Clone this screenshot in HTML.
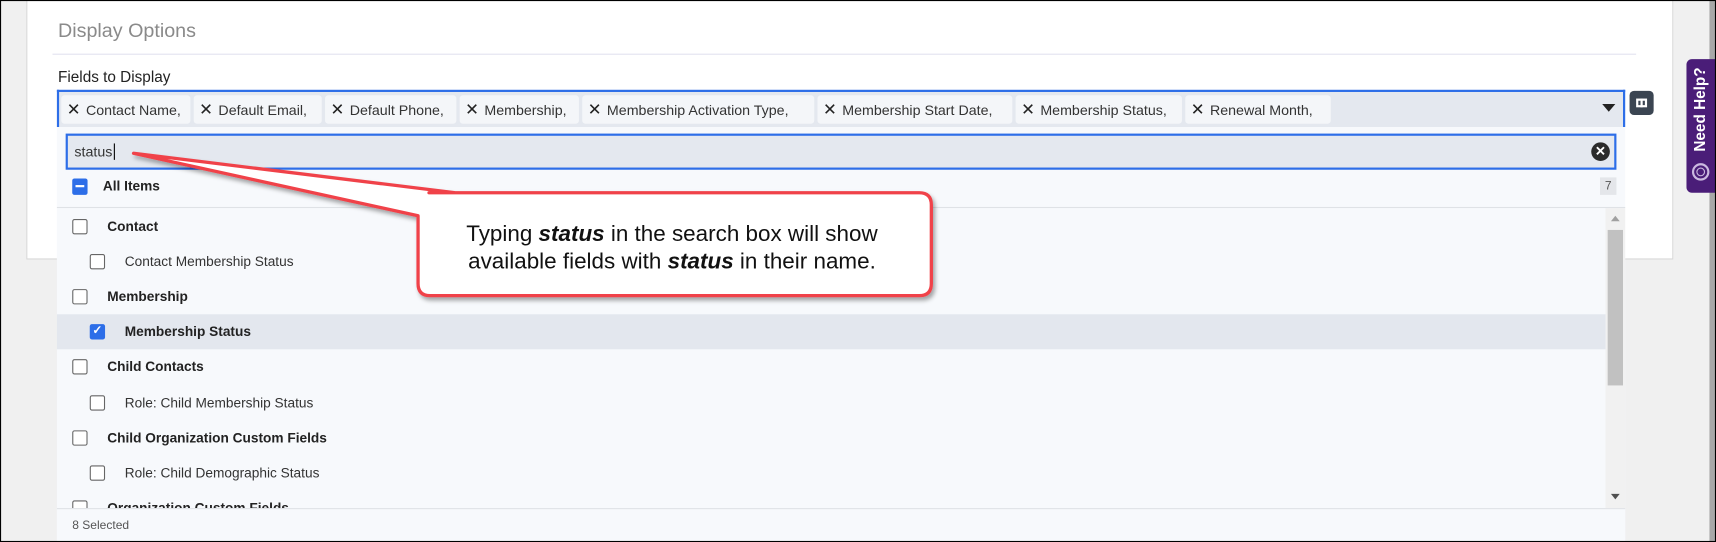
<!DOCTYPE html>
<html><head><meta charset="utf-8"><style>
*{box-sizing:border-box;margin:0;padding:0}
html,body{width:1716px;height:542px;overflow:hidden;background:#f0f0f0}
#s{position:absolute;left:0;top:0;width:1568px;height:495px;transform:scale(1.0944,1.095);transform-origin:0 0;font-family:"Liberation Sans",sans-serif;background:#f0f0f0;overflow:hidden}
.a{position:absolute}
.chip{display:inline-flex;align-items:center;height:26px;background:#f4f6f9;border-radius:3px;margin-right:3px;padding:0 4px 0 5px;font-size:13px;color:#333;white-space:nowrap}
.chip b{font-weight:normal;font-size:15px;margin-right:5px;color:#222}
.row{position:absolute;left:52px;width:1415px;height:32px;font-size:12.5px;color:#222}
.cb{position:absolute;top:9px;width:14px;height:14px;border:1.5px solid #666;border-radius:2px;background:#fff}
.row span{position:absolute;top:9px}
.g{font-weight:bold}
</style></head><body><div id="s">
<div class="a" style="left:0;top:0;width:1568px;height:495px;border:1px solid #000;z-index:20;pointer-events:none"></div>
<div class="a" style="left:1562px;top:0;width:6px;height:495px;background:#a8a8a8"></div>
<div class="a" style="left:24px;top:-1px;width:1505px;height:238px;background:#fff;border:1px solid #d8d8d8"></div>
<div class="a" style="left:53px;top:18px;font-size:18px;color:#8a8a8a">Display Options</div>
<div class="a" style="left:48px;top:49px;width:1447px;height:1px;background:#e2e2ef"></div>
<div class="a" style="left:53px;top:62px;font-size:14px;color:#222">Fields to Display</div>
<div class="a" style="left:52px;top:82px;width:1433px;height:34px;border:2px solid #2d6ee8;border-bottom:none;background:#e4e8ef;padding:3px 0 0 2px;display:flex">
<div class="chip" style="width:118px"><b>✕</b>Contact Name,</div>
<div class="chip" style="width:117px"><b>✕</b>Default Email,</div>
<div class="chip" style="width:120px"><b>✕</b>Default Phone,</div>
<div class="chip" style="width:109px"><b>✕</b>Membership,</div>
<div class="chip" style="width:212px"><b>✕</b>Membership Activation Type,</div>
<div class="chip" style="width:178px"><b>✕</b>Membership Start Date,</div>
<div class="chip" style="width:152px"><b>✕</b>Membership Status,</div>
<div class="chip" style="width:133px"><b>✕</b>Renewal Month,</div>
</div>
<div class="a" style="left:1464px;top:95px;width:0;height:0;border-left:6px solid transparent;border-right:6px solid transparent;border-top:7px solid #222"></div>
<div class="a" style="left:1489px;top:83px;width:22px;height:22px;background:#3b4552;border-radius:4px"><div class="a" style="left:6px;top:7px;width:10px;height:8px;border:2px solid #fff;background:#3b4552"></div><div class="a" style="left:10px;top:7px;width:2px;height:8px;background:#fff"></div></div>
<div class="a" style="left:52px;top:116px;width:1433px;height:379px;background:#f7f9fc"></div>
<div class="a" style="left:60px;top:122px;width:1417px;height:33px;border:2px solid #2d6ee8;background:#e4e8ef;font-size:13px;color:#333;padding:7px 6px">status<span style="border-left:1px solid #000;margin-left:1px"></span></div>
<div class="a" style="left:1454px;top:130px;width:17px;height:17px;border-radius:50%;background:#2b2b2b;color:#fff;font-size:12px;font-weight:bold;text-align:center;line-height:17px">✕</div>
<div class="a" style="left:66px;top:163px;width:14px;height:15px;background:#2d6ee8;border-radius:2px"><div class="a" style="left:3px;top:6px;width:8px;height:2px;background:#fff"></div></div>
<div class="a g" style="left:94px;top:163px;font-size:12.5px;color:#222">All Items</div>
<div class="a" style="left:1462px;top:162px;width:15px;height:16px;background:#e4e6ea;font-size:11px;color:#555;text-align:center;line-height:16px">7</div>
<div class="a" style="left:52px;top:189px;width:1433px;height:1px;background:#dfe2e6"></div>
<div class="row" style="top:191px"><div class="cb" style="left:14px"></div><span class="g" style="left:46px">Contact</span></div>
<div class="row" style="top:223px"><div class="cb" style="left:30px"></div><span style="left:62px;color:#333">Contact Membership Status</span></div>
<div class="row" style="top:255px"><div class="cb" style="left:14px"></div><span class="g" style="left:46px">Membership</span></div>
<div class="row" style="top:287px;background:#e3e7ee"><div class="cb" style="left:30px;background:#2d6ee8;border-color:#2d6ee8;color:#fff;font-size:11px;line-height:11px;text-align:center;font-weight:bold">✓</div><span class="g" style="left:62px">Membership Status</span></div>
<div class="row" style="top:319px"><div class="cb" style="left:14px"></div><span class="g" style="left:46px">Child Contacts</span></div>
<div class="row" style="top:352px"><div class="cb" style="left:30px"></div><span style="left:62px;color:#333">Role: Child Membership Status</span></div>
<div class="row" style="top:384px"><div class="cb" style="left:14px"></div><span class="g" style="left:46px">Child Organization Custom Fields</span></div>
<div class="row" style="top:416px"><div class="cb" style="left:30px"></div><span style="left:62px;color:#333">Role: Child Demographic Status</span></div>
<div class="row" style="top:448px;height:16px;overflow:hidden"><div class="cb" style="left:14px"></div><span class="g" style="left:46px">Organization Custom Fields</span></div>
<div class="a" style="left:52px;top:464px;width:1433px;height:31px;border-top:1px solid #dfe2e6;background:#f7f9fc;font-size:11px;color:#555;padding:9px 14px">8 Selected</div>
<div class="a" style="left:1467px;top:190px;width:18px;height:274px;background:#f1f1f1"></div>
<div class="a" style="left:1469px;top:210px;width:14px;height:142px;background:#c1c1c1"></div>
<div class="a" style="left:1472px;top:197px;border-left:4px solid transparent;border-right:4px solid transparent;border-bottom:5px solid #a0a0a0;width:0;height:0"></div>
<div class="a" style="left:1472px;top:451px;border-left:4px solid transparent;border-right:4px solid transparent;border-top:5px solid #505050;width:0;height:0"></div>
<div class="a" style="left:1541px;top:54px;width:27px;height:122px;background:#4a1d78;border-radius:5px 0 0 5px"></div>
<div class="a" style="left:1491px;top:90px;width:128px;height:20px;transform:rotate(-90deg);transform-origin:64px 10px;color:#fff;font-weight:bold;font-size:14px;text-align:center">Need Help?</div>
<div class="a" style="left:1546px;top:149px;width:16px;height:16px;border:2px solid #cbb9e0;border-radius:50%"><div class="a" style="left:2px;top:2px;width:8px;height:8px;border:1.5px solid #cbb9e0;border-radius:50%"></div></div>
<svg class="a" style="left:0;top:0" width="1568" height="495">
<defs><filter id="sh"><feDropShadow dx="2" dy="3" stdDeviation="2" flood-opacity="0.35"/></filter></defs>
<path d="M392,176 L840,176 Q851,176 851,187 L851,259 Q851,270 840,270 L393,270 Q382,270 382,259 L382,197 L122,140 L416,176 Z" fill="#fff" stroke="#f0424a" stroke-width="3" stroke-linejoin="round" filter="url(#sh)"/>
<text x="614" y="220" font-family="Liberation Sans" font-size="20.5" text-anchor="middle" fill="#111">Typing <tspan font-weight="bold" font-style="italic">status</tspan> in the search box will show</text>
<text x="614" y="245" font-family="Liberation Sans" font-size="20.5" text-anchor="middle" fill="#111">available fields with <tspan font-weight="bold" font-style="italic">status</tspan> in their name.</text>
</svg>
</div></body></html>
